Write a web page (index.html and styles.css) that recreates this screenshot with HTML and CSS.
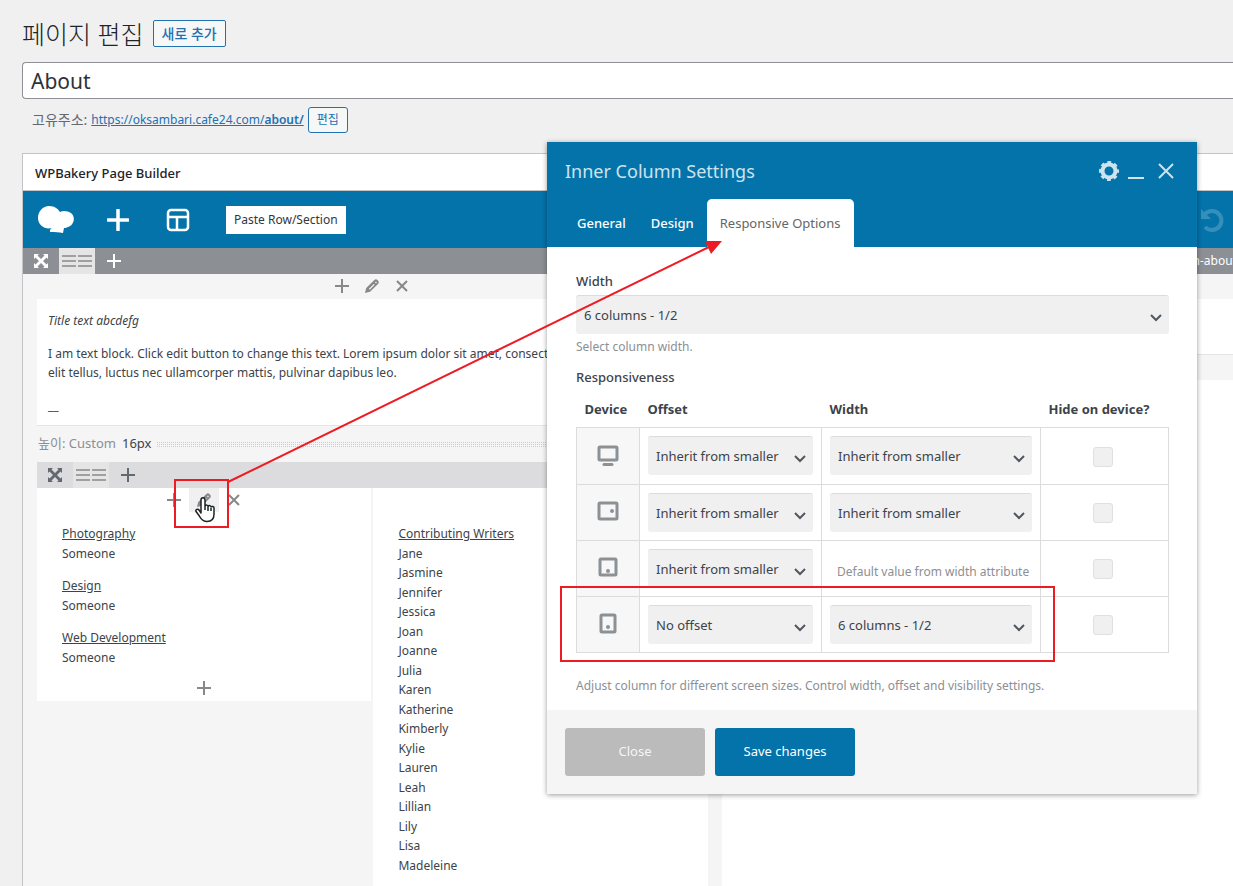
FILE: index.html
```html
<!DOCTYPE html>
<html lang="ko">
  <head>
    <meta charset="utf-8">
    <meta name="viewport" content="width=device-width, initial-scale=1">
    <title>페이지 편집</title>
    <link rel="stylesheet" href="styles.css">
  </head>
  <body>
    <!-- icons shared by the rows and columns -->
    <svg class="defs" aria-hidden="true">
      <symbol id="i-plus" viewBox="0 0 14 14"><path d="M7 0v14M0 7h14" fill="none" stroke="currentColor" stroke-width="2"/></symbol>
      <symbol id="i-close" viewBox="0 0 14 14"><path d="M2 2l10 10M12 2L2 12" fill="none" stroke="currentColor" stroke-width="2"/></symbol>
      <symbol id="i-pencil" viewBox="0 0 14 14">
        <path fill="currentColor" fill-rule="evenodd" d="M0 14l1.200-4.900L9.400.9q1.500-1.500 3.300.300t.6 3.500L5 12.800zM3.800 9.900l.9.900 5-5-.9-.9zM10 3.400l1 1 .9-.9-1-1z"/>
      </symbol>
      <symbol id="i-move" viewBox="0 0 14 14">
        <path fill="currentColor" d="M0 0h5L3.500 1.500 7 5l3.500-3.500L9 0h5v5l-1.500-1.500L9 7l3.500 3.500L14 9v5H9l1.500-1.500L7 9l-3.500 3.500L5 14H0V9l1.500 1.500L5 7 1.500 3.500 0 5z"/>
      </symbol>
      <symbol id="i-cols" viewBox="0 0 30 14"><path d="M0 2h14M16 2h14M0 7h14M16 7h14M0 12h14M16 12h14" stroke="currentColor" stroke-width="2"/></symbol>
    </svg>

    <div class="wrap">
      <div class="heading">
        <h1>페이지 편집</h1>
        <button class="btn">새로 추가</button>
      </div>
      <input class="title" type="text" value="About" aria-label="Title">
      <div class="permalink">
        <span class="permalink-label">고유주소:</span>
        <a href="#">https://oksambari.cafe24.com/<b>about/</b></a>
        <button class="btn small">편집</button>
      </div>

      <div class="postbox">
        <h2>WPBakery Page Builder</h2>
        <div class="navbar">
          <svg class="logo" width="36" height="28" viewBox="0 0 36 28">
            <path fill="#fff" d="M11 0C17 0 20 3 22 6c3-2 8-1 11 1 5 4 3 12-3 14-2 1-3 1-4 1l-1 5c-4-1-8-1-12-1-2 0-1-3 1-4-7 2-14-3-14-10C0 5 5 0 11 0z"/>
          </svg>
          <button class="nav-icon" aria-label="Add element">
            <svg width="22" height="22" viewBox="0 0 22 22"><path d="M11 1v20M1 11h20" stroke="#fff" stroke-width="3.500" stroke-linecap="round"/></svg>
          </button>
          <button class="nav-icon" aria-label="Templates">
            <svg width="24" height="24" viewBox="0 0 24 24" fill="none" stroke="#fff" stroke-width="2.500"><rect x="2" y="2" width="20" height="20" rx="3"/><path d="M2 9h20M11 9v13"/></svg>
          </button>
          <button class="paste">Paste Row/Section</button>
          <button class="undo" aria-label="Undo">
            <svg width="24" height="24" viewBox="0 0 24 24"><path d="M5 6a9.500 9.500 0 1 1 0 13" fill="none" stroke="#fff" stroke-width="4"/><path d="M1 1v10h10z" fill="#fff"/></svg>
          </button>
        </div>

        <div class="bar">
          <button class="tool" aria-label="Move row"><svg width="14" height="14"><use href="#i-move"/></svg></button>
          <button class="tool on" aria-label="Row layout"><svg width="30" height="14"><use href="#i-cols"/></svg></button>
          <button class="tool" aria-label="Add column"><svg width="14" height="14"><use href="#i-plus"/></svg></button>
          <span class="row-id">n-about</span>
        </div>

        <div class="row">
          <div class="column">
            <div class="controls">
              <button aria-label="Add"><svg width="14" height="14"><use href="#i-plus"/></svg></button>
              <button aria-label="Edit"><svg width="14" height="14"><use href="#i-pencil"/></svg></button>
              <button aria-label="Delete"><svg width="14" height="14"><use href="#i-close"/></svg></button>
            </div>
            <div class="text-block">
              <p><i>Title text abcdefg</i></p>
              <p>I am text block. Click edit button to change this text. Lorem ipsum dolor sit amet, consectetur<br>elit tellus, luctus nec ullamcorper mattis, pulvinar dapibus leo.</p>
              <p>__</p>
            </div>
            <div class="spacer">
              <span>높이: Custom</span>
              <span class="size">16px</span>
              <div class="dots"></div>
            </div>

            <div class="bar inner">
              <button class="tool" aria-label="Move inner row"><svg width="14" height="14"><use href="#i-move"/></svg></button>
              <button class="tool on" aria-label="Inner row layout"><svg width="30" height="14"><use href="#i-cols"/></svg></button>
              <button class="tool" aria-label="Add inner column"><svg width="14" height="14"><use href="#i-plus"/></svg></button>
            </div>
            <div class="inner-row">
              <div class="inner-col first">
                <div class="controls">
                  <button aria-label="Add"><svg width="14" height="14"><use href="#i-plus"/></svg></button>
                  <button class="hover" aria-label="Edit"><svg width="14" height="14"><use href="#i-pencil"/></svg></button>
                  <button aria-label="Delete"><svg width="14" height="14"><use href="#i-close"/></svg></button>
                </div>
                <div class="credits">
                  <p><u>Photography</u><br>Someone</p>
                  <p><u>Design</u><br>Someone</p>
                  <p><u>Web Development</u><br>Someone</p>
                </div>
                <div class="controls">
                  <button aria-label="Add"><svg width="14" height="14"><use href="#i-plus"/></svg></button>
                </div>
              </div>
              <div class="inner-col">
                <div class="controls"></div>
                <div class="credits">
                  <p><u>Contributing Writers</u><br>Jane<br>Jasmine<br>Jennifer<br>Jessica<br>Joan<br>Joanne<br>Julia<br>Karen<br>Katherine<br>Kimberly<br>Kylie<br>Lauren<br>Leah<br>Lillian<br>Lily<br>Lisa<br>Madeleine</p>
                </div>
              </div>
            </div>
          </div>
          <div class="column">
            <div class="controls"></div>
            <div class="blank"></div>
            <div class="controls"></div>
            <div class="blank rest"></div>
          </div>
        </div>
      </div>
    </div>

    <div class="panel" role="dialog" aria-label="Inner Column Settings">
      <div class="panel-head">
        <div class="panel-title">
          <h3>Inner Column Settings</h3>
          <button aria-label="Settings">
            <svg width="20" height="20" viewBox="0 0 20 20"><circle cx="10" cy="10" r="6.500" fill="none" stroke="currentColor" stroke-width="4"/><circle cx="10" cy="10" r="8.500" fill="none" stroke="currentColor" stroke-width="3" stroke-dasharray="3.700 2.975" stroke-dashoffset="1.850"/></svg>
          </button>
          <button aria-label="Minimize">
            <svg width="16" height="20" viewBox="0 0 16 20"><path d="M0 17h16" stroke="currentColor" stroke-width="2"/></svg>
          </button>
          <button class="x" aria-label="Close panel">
            <svg width="16" height="16" viewBox="0 0 16 16"><path d="M1 1l14 14M15 1L1 15" stroke="currentColor" stroke-width="2"/></svg>
          </button>
        </div>
        <div class="tabs">
          <button>General</button>
          <button>Design</button>
          <button class="active">Responsive Options</button>
        </div>
      </div>

      <div class="panel-body">
        <label class="label" for="width">Width</label>
        <select id="width"><option>6 columns - 1/2</option></select>
        <p class="hint">Select column width.</p>
        <div class="label second">Responsiveness</div>
        <table>
          <thead>
            <tr><th class="c-device">Device</th><th class="c-offset">Offset</th><th class="c-width">Width</th><th>Hide on device?</th></tr>
          </thead>
          <tbody>
            <tr>
              <td class="device"><svg width="22" height="22" viewBox="0 0 22 22"><rect x="2" y="2" width="18" height="13" rx="1" fill="none" stroke="currentColor" stroke-width="3"/><path d="M7 19.500h8" stroke="currentColor" stroke-width="3" stroke-linecap="round"/></svg></td>
              <td><select aria-label="Desktop offset"><option>Inherit from smaller</option></select></td>
              <td><select aria-label="Desktop width"><option>Inherit from smaller</option></select></td>
              <td class="hide"><input type="checkbox" aria-label="Hide on desktop"></td>
            </tr>
            <tr>
              <td class="device"><svg width="22" height="22" viewBox="0 0 22 22"><rect x="2" y="2" width="18" height="16" rx="1" fill="none" stroke="currentColor" stroke-width="3"/><circle cx="15" cy="10" r="2" fill="currentColor"/></svg></td>
              <td><select aria-label="Tablet landscape offset"><option>Inherit from smaller</option></select></td>
              <td><select aria-label="Tablet landscape width"><option>Inherit from smaller</option></select></td>
              <td class="hide"><input type="checkbox" aria-label="Hide on tablet landscape"></td>
            </tr>
            <tr>
              <td class="device"><svg width="22" height="22" viewBox="0 0 22 22"><rect x="3" y="2" width="16" height="16" rx="1" fill="none" stroke="currentColor" stroke-width="3"/><circle cx="11" cy="14" r="2" fill="currentColor"/></svg></td>
              <td><select aria-label="Tablet portrait offset"><option>Inherit from smaller</option></select></td>
              <td class="default">Default value from width attribute</td>
              <td class="hide"><input type="checkbox" aria-label="Hide on tablet portrait"></td>
            </tr>
            <tr>
              <td class="device"><svg width="22" height="22" viewBox="0 0 22 22"><rect x="4" y="2" width="14" height="17" rx="1" fill="none" stroke="currentColor" stroke-width="3"/><circle cx="11" cy="14" r="2" fill="currentColor"/></svg></td>
              <td><select aria-label="Mobile offset"><option>No offset</option></select></td>
              <td><select aria-label="Mobile width"><option>6 columns - 1/2</option></select></td>
              <td class="hide"><input type="checkbox" aria-label="Hide on mobile"></td>
            </tr>
          </tbody>
        </table>
        <p class="hint last">Adjust column for different screen sizes. Control width, offset and visibility settings.</p>
      </div>

      <div class="panel-foot">
        <button class="close">Close</button>
        <button class="save">Save changes</button>
      </div>
    </div>

    <!-- red marks and the hand pointer -->
    <svg class="marks" width="1233" height="886" viewBox="0 0 1233 886" aria-hidden="true">
      <g fill="none" stroke="#ed1c24" stroke-width="2">
        <rect x="175" y="480" width="53" height="47"/>
        <rect x="561" y="587" width="493" height="74"/>
        <path d="M228 482L711 246"/>
      </g>
      <path fill="#ed1c24" d="M722 241h-17l6 13z"/>
      <path fill="#fff" stroke="#1d2327" stroke-width="1.500" stroke-linejoin="round" d="M201 513v-13c0-3 4-3 4 0v6c1-1.500 3-1 3 .5 1-1.500 3-1 3 .5 1-1 3-.5 3 1v6c0 5-3 7.500-7 7.500-5 0-6-3-8-6l-3-4c-1-2 2-3 3-1.500zM205 506v4M208 507v4M211 508v3"/>
    </svg>
  </body>
</html>
```

FILE: styles.css
```css
* {
  box-sizing: border-box;
}
body {
  margin: 0;
  height: 100vh;
  overflow: hidden;
  position: relative;
  background: #f0f0f0;
  color: #3c434a;
  font-family: "Noto Sans", "Noto Sans CJK KR", sans-serif;
  font-size: 12px;
  line-height: 1.625;
}
h1, h2, h3, p {
  margin: 0;
  font-weight: 400;
}
button {
  font: inherit;
  color: inherit;
  background: none;
  border: 0;
  padding: 0;
}
svg {
  display: block;
}
.defs {
  position: absolute;
  width: 0;
  height: 0;
}
.wrap {
  height: 100%;
  padding: 20px 0 0 22px;
  display: flex;
  flex-direction: column;
}
.heading {
  display: flex;
  align-items: center;
  gap: 9px;
  height: 27px;
}
h1 {
  color: #1d2327;
  font-size: 25px;
  font-weight: 300;
  line-height: 24px;
}
.btn {
  height: 27px;
  padding: 0 8px;
  border: 1px solid #2271b1;
  border-radius: 2px;
  background: #f6f7f7;
  color: #2271b1;
  font-size: 14px;
  font-weight: 500;
  line-height: 20px;
}
.btn.small {
  height: 26px;
  border-radius: 3px;
  font-size: 12px;
  font-weight: 400;
}
.title {
  height: 37px;
  margin-top: 15px;
  padding: 1px 8px 0;
  border: 1px solid #8c8f94;
  border-right: 0;
  border-radius: 4px 0 0 4px;
  background: #fff;
  color: #2c3338;
  font: inherit;
  font-size: 21px;
}
.permalink {
  display: flex;
  align-items: center;
  gap: 4px;
  height: 26px;
  margin: 8px 0 20px;
  padding-left: 10px;
  color: #646970;
}
.permalink-label {
  font-size: 14px;
}
.permalink a {
  color: #2271b1;
}
.permalink b {
  font-weight: 600;
}

/* page builder box */
.postbox {
  flex: 1;
  display: flex;
  flex-direction: column;
  border: 1px solid #c3c4c7;
  border-width: 1px 0 0 1px;
  background: #f5f5f5;
}
h2 {
  height: 37px;
  padding-left: 12px;
  border-bottom: 1px solid #c3c4c7;
  background: #fff;
  color: #1d2327;
  font-size: 13px;
  font-weight: 500;
  line-height: 38px;
}
.navbar {
  display: flex;
  align-items: center;
  height: 57px;
  padding: 0 9px 0 15px;
  background: #0473aa;
}
.nav-icon {
  display: flex;
  justify-content: center;
  width: 60px;
}
.logo {
  margin-right: 14px;
}
.paste {
  height: 28px;
  margin-left: 18px;
  padding: 0 8px;
  background: #fff;
  color: #32373c;
}
.undo {
  margin-left: auto;
  opacity: 0.2;
}
.bar {
  display: flex;
  height: 26px;
  background: #8c8f94;
  color: #fff;
}
.tool {
  display: flex;
  align-items: center;
  justify-content: center;
  width: 36px;
}
.tool.on {
  background: #e5e5e5;
  color: #a0a0a0;
}
.tool.on + .tool {
  width: 38px;
}
.bar.inner {
  background: #dcdcde;
  color: #646970;
}
.row-id {
  margin: 0 -4px 0 auto;
  line-height: 25px;
}
.row {
  flex: 1;
  display: grid;
  grid-template-columns: 21fr 16fr;
  gap: 14px;
  padding-left: 14px;
}
.column {
  display: flex;
  flex-direction: column;
  min-width: 0;
}
.controls {
  display: flex;
  justify-content: center;
  height: 25px;
  padding-bottom: 1px;
  color: #888;
}
.controls button {
  display: flex;
  align-items: center;
  justify-content: center;
  width: 30px;
}
.controls .hover {
  background: #f0f0f0;
}
.text-block {
  padding: 12px 11px 10px;
  border-bottom: 1px solid #e5e5e5;
  background: #fff;
  line-height: 19px;
}
.text-block p + p {
  margin-top: 14px;
}
.spacer {
  display: flex;
  align-items: center;
  gap: 6px;
  height: 36px;
  padding-left: 1px;
  color: #8c8f94;
  font-size: 13px;
}
.spacer .size {
  color: #3c434a;
}
.dots {
  flex: 1;
  height: 5px;
  background: repeating-linear-gradient(90deg, transparent 0 1px, #f5f5f5 1px 2px), repeating-linear-gradient(#ccc 0 1px, transparent 1px 2px);
}
.inner-row {
  flex: 1;
  display: grid;
  grid-template-columns: 1fr 1fr;
  gap: 2px;
}
.inner-col {
  background: #fff;
}
.inner-col.first {
  align-self: start;
}
.credits {
  padding: 11px 25px 9px;
}
.credits p + p {
  margin-top: 13px;
}
.blank {
  height: 56px;
  border-bottom: 1px solid #e5e5e5;
  background: #fff;
}
.blank.rest {
  flex: 1;
  border-bottom: 0;
}

/* settings window */
.panel {
  position: absolute;
  top: 142px;
  left: 547px;
  width: 650px;
  background: #fff;
  box-shadow: 0 1px 5px rgba(0, 0, 0, 0.4);
  font-size: 13px;
}
.panel-head {
  padding: 0 18px;
  background: #0473aa;
  color: #fff;
}
.panel-title {
  display: flex;
  align-items: center;
  height: 57px;
  color: #cde3ee;
}
.panel-title h3 {
  margin-right: auto;
  padding-top: 2px;
  font-size: 18px;
}
.panel-title button {
  margin-right: 9px;
}
.panel-title .x {
  margin: 0 5px;
}
.tabs {
  display: flex;
  height: 48px;
}
.tabs button {
  padding: 2px 13px 0 12px;
  border-radius: 5px 5px 0 0;
  font-weight: 500;
}
.tabs .active {
  padding-left: 13px;
  background: #fff;
  color: #666;
  font-weight: 400;
}
.panel-body {
  padding: 24px 28px 15px 29px;
}
.label {
  display: block;
  margin-bottom: 4px;
  font-weight: 500;
  line-height: 20px;
}
.label.second {
  margin-top: 11px;
}
select {
  display: block;
  appearance: none;
  width: 100%;
  height: 39px;
  padding: 2px 8px 0;
  border: 0;
  border-top: 1px solid #dcdcde;
  border-radius: 3px;
  background: #f0f0f0 url("data:image/svg+xml,%3Csvg xmlns='http://www.w3.org/2000/svg' width='12' height='9'%3E%3Cpath d='M1 2l5 5 5-5' fill='none' stroke='%2350575e' stroke-width='2'/%3E%3C/svg%3E") no-repeat right 7px top 17px;
  color: #3c434a;
  font: inherit;
}
.hint {
  margin-top: 3px;
  color: #8c8f94;
  font-size: 12px;
  line-height: 19px;
}
.hint.last {
  margin-top: 23px;
}
table {
  width: 100%;
  border-collapse: collapse;
  table-layout: fixed;
}
th {
  height: 36px;
  padding: 2px 8px 0;
  text-align: left;
  font-weight: 700;
}
.c-device {
  width: 63px;
}
.c-offset {
  width: 182px;
}
.c-width {
  width: 219px;
}
td {
  height: 56px;
  padding: 8px;
  border: 1px solid #dcdcde;
}
tbody tr:first-child td {
  height: 57px;
}
.device {
  background: #f7f7f7;
  color: #8c9196;
}
.device svg {
  margin: 0 auto;
}
.default {
  padding: 16px 8px 8px 15px;
  color: #8c8f94;
  font-size: 12px;
}
td.hide {
  padding: 10px 12px 8px 8px;
}
.hide input {
  display: block;
  appearance: none;
  width: 20px;
  height: 20px;
  margin: 0 auto;
  border: 1px solid #e0e0e0;
  border-radius: 3px;
  background: #f0f0f0;
}
.panel-foot {
  display: flex;
  gap: 10px;
  padding: 18px;
  background: #f5f5f5;
}
.panel-foot button {
  width: 140px;
  height: 48px;
  border-radius: 3px;
  background: #bbb;
  color: #f5f5f5;
}
.panel-foot .save {
  background: #0473aa;
  color: #fff;
}
.marks {
  position: absolute;
  top: 0;
  left: 0;
  pointer-events: none;
}
```
